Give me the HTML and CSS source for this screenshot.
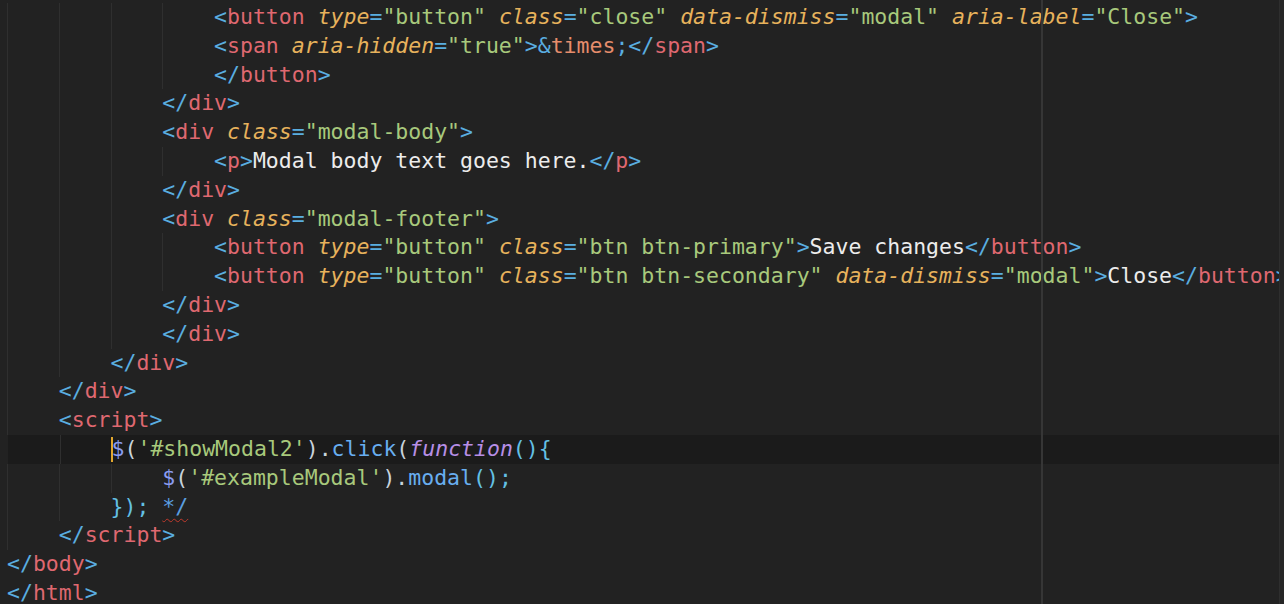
FILE: index.html
```html
<!DOCTYPE html>
<html lang="en">
<head>
    <meta charset="UTF-8">
    <title>index.html</title>
    <link rel="stylesheet" href="styles.css">
</head>
<body>

<div class="editor">
    <div class="line"><span class="ind"></span><span class="ind"></span><span class="ind"></span><span class="ind"></span><span class="p">&lt;</span><span class="tag">button</span> <span class="attr">type</span><span class="p">=</span><span class="str">"button"</span> <span class="attr">class</span><span class="p">=</span><span class="str">"close"</span> <span class="attr">data-dismiss</span><span class="p">=</span><span class="str">"modal"</span> <span class="attr">aria-label</span><span class="p">=</span><span class="str">"Close"</span><span class="p">&gt;</span></div>
    <div class="line"><span class="ind"></span><span class="ind"></span><span class="ind"></span><span class="ind"></span><span class="p">&lt;</span><span class="tag">span</span> <span class="attr">aria-hidden</span><span class="p">=</span><span class="str">"true"</span><span class="p">&gt;&amp;</span><span class="ent">times</span><span class="p">;&lt;/</span><span class="tag">span</span><span class="p">&gt;</span></div>
    <div class="line"><span class="ind"></span><span class="ind"></span><span class="ind"></span><span class="ind"></span><span class="p">&lt;/</span><span class="tag">button</span><span class="p">&gt;</span></div>
    <div class="line"><span class="ind"></span><span class="ind"></span><span class="ind"></span><span class="p">&lt;/</span><span class="tag">div</span><span class="p">&gt;</span></div>
    <div class="line"><span class="ind"></span><span class="ind"></span><span class="ind"></span><span class="p">&lt;</span><span class="tag">div</span> <span class="attr">class</span><span class="p">=</span><span class="str">"modal-body"</span><span class="p">&gt;</span></div>
    <div class="line"><span class="ind"></span><span class="ind"></span><span class="ind"></span><span class="ind"></span><span class="p">&lt;</span><span class="tag">p</span><span class="p">&gt;</span><span class="txt">Modal body text goes here.</span><span class="p">&lt;/</span><span class="tag">p</span><span class="p">&gt;</span></div>
    <div class="line"><span class="ind"></span><span class="ind"></span><span class="ind"></span><span class="p">&lt;/</span><span class="tag">div</span><span class="p">&gt;</span></div>
    <div class="line"><span class="ind"></span><span class="ind"></span><span class="ind"></span><span class="p">&lt;</span><span class="tag">div</span> <span class="attr">class</span><span class="p">=</span><span class="str">"modal-footer"</span><span class="p">&gt;</span></div>
    <div class="line"><span class="ind"></span><span class="ind"></span><span class="ind"></span><span class="ind"></span><span class="p">&lt;</span><span class="tag">button</span> <span class="attr">type</span><span class="p">=</span><span class="str">"button"</span> <span class="attr">class</span><span class="p">=</span><span class="str">"btn btn-primary"</span><span class="p">&gt;</span><span class="txt">Save changes</span><span class="p">&lt;/</span><span class="tag">button</span><span class="p">&gt;</span></div>
    <div class="line"><span class="ind"></span><span class="ind"></span><span class="ind"></span><span class="ind"></span><span class="p">&lt;</span><span class="tag">button</span> <span class="attr">type</span><span class="p">=</span><span class="str">"button"</span> <span class="attr">class</span><span class="p">=</span><span class="str">"btn btn-secondary"</span> <span class="attr">data-dismiss</span><span class="p">=</span><span class="str">"modal"</span><span class="p">&gt;</span><span class="txt">Close</span><span class="p">&lt;/</span><span class="tag">button</span><span class="p">&gt;</span></div>
    <div class="line"><span class="ind"></span><span class="ind"></span><span class="ind"></span><span class="p">&lt;/</span><span class="tag">div</span><span class="p">&gt;</span></div>
    <div class="line"><span class="ind"></span><span class="ind"></span><span class="ind"></span><span class="p">&lt;/</span><span class="tag">div</span><span class="p">&gt;</span></div>
    <div class="line"><span class="ind"></span><span class="ind"></span><span class="p">&lt;/</span><span class="tag">div</span><span class="p">&gt;</span></div>
    <div class="line"><span class="ind"></span><span class="p">&lt;/</span><span class="tag">div</span><span class="p">&gt;</span></div>
    <div class="line"><span class="ind"></span><span class="p">&lt;</span><span class="tag">script</span><span class="p">&gt;</span></div>
    <div class="line current"><span class="ind"></span><span class="ind"></span><span class="caret"></span><span class="fn-var">$</span><span class="paren">(</span><span class="str">'#showModal2'</span><span class="paren">).</span><span class="method">click</span><span class="paren">(</span><span class="kw">function</span><span class="brace">(){</span></div>
    <div class="line"><span class="ind"></span><span class="ind"></span><span class="ind"></span><span class="fn-var">$</span><span class="paren">(</span><span class="str">'#exampleModal'</span><span class="paren">).</span><span class="method">modal</span><span class="brace">();</span></div>
    <div class="line"><span class="ind"></span><span class="ind"></span><span class="brace">});</span> <span class="comment-end">*/</span></div>
    <div class="line"><span class="ind"></span><span class="p">&lt;/</span><span class="tag">script</span><span class="p">&gt;</span></div>
    <div class="line"><span class="p">&lt;/</span><span class="tag">body</span><span class="p">&gt;</span></div>
    <div class="line"><span class="p">&lt;/</span><span class="tag">html</span><span class="p">&gt;</span></div>
</div>

</body>
</html>
```

FILE: styles.css
```css
html, body { margin: 0; height: 100%; background: #222222; overflow: hidden; }
.editor { position: relative; width: 1284px; height: 604px; padding-top: 3px; box-sizing: border-box; background: #222222; font-family: "DejaVu Sans Mono", "Liberation Mono", monospace; font-size: 21.5px; line-height: 28.8px; color: #e6e6e6; overflow: hidden; }
.editor::after { content: ""; position: absolute; top: 0; bottom: 0; left: 1041px; width: 2px; background: #363636; }
.editor::before { content: ""; position: absolute; top: 0; bottom: 0; right: 0; width: 4px; background: #262626; border-left: 1px solid #2e2e2e; z-index: 1; }
.line { height: 28.8px; padding-left: 7px; white-space: pre; }
.line.current { background: #1b1b1b; margin-left: 8px; padding-left: 0; }
.line.current .ind:first-child { background: none; }
.ind { display: inline-block; width: 4ch; height: 28.8px; vertical-align: top; background: linear-gradient(to right, #2f2f2f 1px, transparent 1px); }
.caret { display: inline-block; width: 2px; height: 25px; margin-left: -1px; margin-right: -1px; vertical-align: top; margin-top: 2px; background: #e2a72e; }
.p { color: #5aaee0; }
.tag { color: #df6870; }
.attr { color: #e7b25c; font-style: italic; }
.str { color: #a8c97c; }
.txt { color: #ececec; }
.ent { color: #e68d6c; }
.fn-var { color: #8a9cf0; }
.paren { color: #c9d3dc; }
.method { color: #68aef0; }
.kw { color: #b78ee6; font-style: italic; }
.brace { color: #64c0e4; }
.comment-end { color: #5b9fe0; text-decoration: underline wavy #c0392b; text-decoration-thickness: 1px; text-underline-offset: 4px; }
```
